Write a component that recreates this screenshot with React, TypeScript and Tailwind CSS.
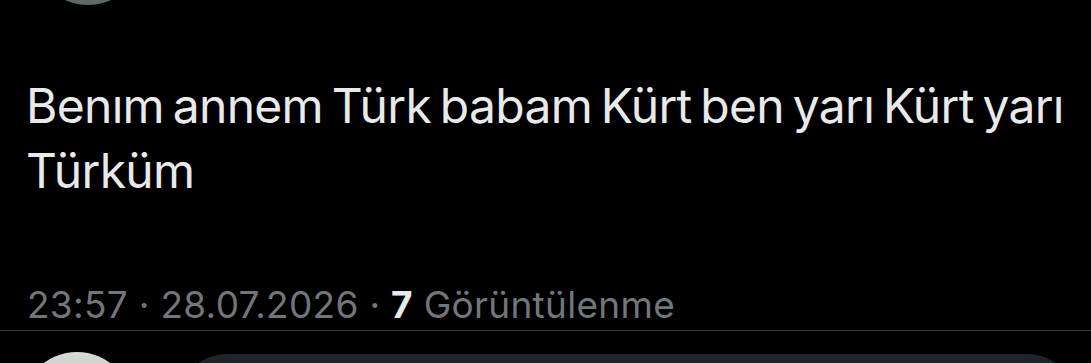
export default function App() {
  return (
    <main className="w-full h-[363px] bg-black overflow-hidden flex flex-col font-['Inter',sans-serif]">
      <div className="ml-[32px] mt-[-107px] w-[112px] h-[112px] shrink-0 rounded-full bg-[#5e6864]" />

      <p className="mt-[68px] px-[26px] text-[48px] leading-[65px] text-[#e7e9ea] whitespace-nowrap tracking-[-0.7px] [word-spacing:-4px]">
        Benım annem Türk babam Kürt ben yarı Kürt yarı
        <br />
        Türküm
      </p>

      <div className="mt-[80px] px-[27px] text-[37px] leading-[44px] text-[#71767b] whitespace-nowrap tracking-[0.3px]">
        23:57 · 28.07.2026 · <span className="font-bold text-[#e7e9ea]">7</span> Görüntülenme
      </div>

      <div className="mt-[3px] h-px shrink-0 bg-[#3b3b3d]" />

      <div className="mt-[21px] flex items-start gap-[44px] shrink-0">
        <div className="ml-[21px] w-[112px] h-[112px] shrink-0 rounded-full bg-gradient-to-b from-[#d9dcd6] to-[#8c918b]" />
        <div className="mt-[2px] w-[900px] h-[100px] rounded-full bg-[#202327]" />
      </div>
    </main>
  )
}
